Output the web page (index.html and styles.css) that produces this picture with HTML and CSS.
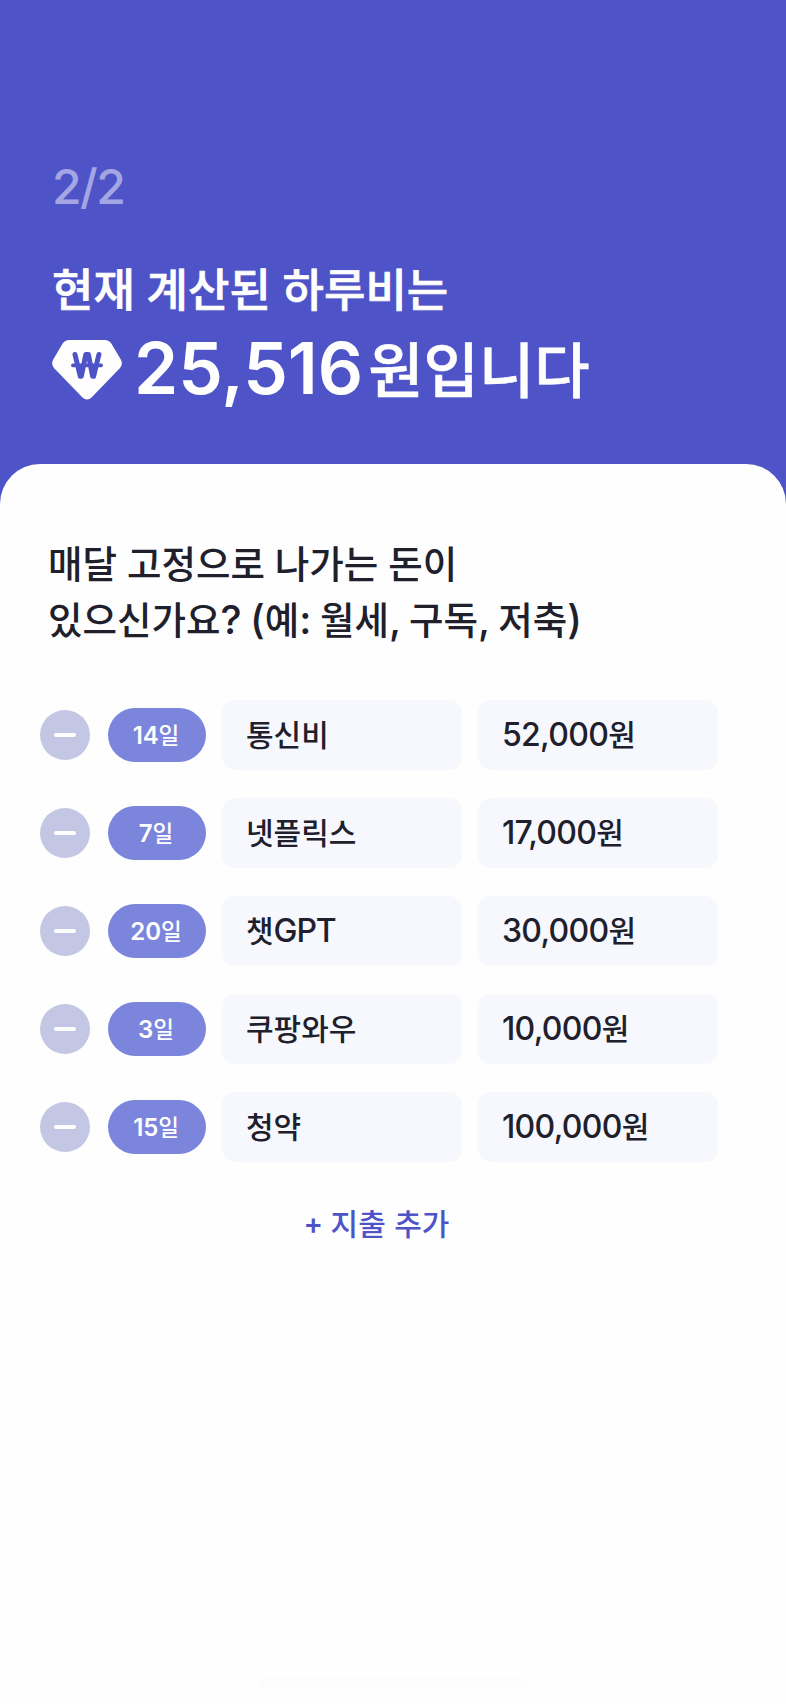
FILE: index.html
```
<!DOCTYPE html>
<html lang="ko">
<head>
<meta charset="utf-8">
<title>하루비</title>
<link rel="stylesheet" href="styles.css">
</head>
<body>
<main class="screen">
  <header class="header">
    <p class="step">2/2</p>
    <h1 class="title"><span class="ko">현재 계산된 하루비는</span></h1>
    <div class="amount">
      <svg class="gem" width="70" height="60" viewBox="0 0 70 60" aria-hidden="true">
        <path fill="#fefefe" d="M17 0H53Q57 0 59.300 3.500L68.800 19.500Q71.300 24 67.800 28.200L40 57Q35 62 30 57L2.200 28.200Q-1.300 24 1.200 19.500L10.700 3.500Q13 0 17 0Z"/>
        <path fill="none" stroke="#4e54c8" stroke-width="5" stroke-linecap="round" stroke-linejoin="round" d="M23 14.500L28.300 36.300H29.300L33.800 14.500H36.400L40.600 36.300H41.600L46.900 14.500"/>
        <path stroke="#4e54c8" stroke-width="3.600" stroke-linecap="round" d="M20.800 25.400H49.200"/>
      </svg>
      <p class="sum">25,516<span class="ko unit">원입니다</span></p>
    </div>
  </header>
  <section class="sheet">
    <h2 class="question"><span class="ko">매달 고정으로 나가는 돈이</span><br><span class="ko">있으신가요</span>? (<span class="ko">예</span>: <span class="ko">월세</span>, <span class="ko">구독</span>, <span class="ko">저축</span>)</h2>
    <ul class="list">
      <li class="row"><button class="minus" aria-label="삭제"></button><span class="day">14<span class="ko">일</span></span><span class="field"><span class="ko">통신비</span></span><span class="field">52,000<span class="ko">원</span></span></li>
      <li class="row"><button class="minus" aria-label="삭제"></button><span class="day">7<span class="ko">일</span></span><span class="field"><span class="ko">넷플릭스</span></span><span class="field">17,000<span class="ko">원</span></span></li>
      <li class="row"><button class="minus" aria-label="삭제"></button><span class="day">20<span class="ko">일</span></span><span class="field latin"><span class="ko">챗</span>GPT</span><span class="field">30,000<span class="ko">원</span></span></li>
      <li class="row"><button class="minus" aria-label="삭제"></button><span class="day">3<span class="ko">일</span></span><span class="field"><span class="ko">쿠팡와우</span></span><span class="field">10,000<span class="ko">원</span></span></li>
      <li class="row"><button class="minus" aria-label="삭제"></button><span class="day">15<span class="ko">일</span></span><span class="field"><span class="ko">청약</span></span><span class="field">100,000<span class="ko">원</span></span></li>
    </ul>
    <button class="add"><span class="plus">+</span><span class="ko">지출 추가</span></button>
    <div class="home-bar"></div>
  </section>
</main>
</body>
</html>
```

FILE: styles.css
```
* { box-sizing: border-box; margin: 0; padding: 0; }

body {
  background: #4e54c8;
  font-family: Inter, "Noto Sans CJK KR", sans-serif;
  font-weight: 500;
}

button { border: 0; background: none; font: inherit; }

.screen {
  display: flex;
  flex-direction: column;
  width: 786px;
  height: 1704px;
  background: #4e54c8;
}

/* Hangul is set slightly smaller than the Latin text beside it */
.ko {
  font-family: "Noto Sans CJK KR", sans-serif;
  font-size: 0.9375em;
  font-weight: 500;
  letter-spacing: 0;
  line-height: 0;
}

.header { padding: 157px 51px 53px 52px; color: #fefefe; }

.step {
  font-size: 48px;
  font-weight: 450;
  line-height: 59px;
  letter-spacing: -1.5px;
  color: #a3a6e3;
}

.title {
  margin-top: 44px;
  font-size: 48px;
  line-height: 59px;
  word-spacing: -0.8px;
  -webkit-text-stroke: 0.7px #fefefe;
}

.amount {
  display: flex;
  align-items: center;
  gap: 12px;
  margin-top: 6px;
}

.gem { display: block; margin-top: 4px; }

.sum {
  font-size: 71px;
  font-weight: 600;
  line-height: 86px;
  white-space: nowrap;
}

.unit {
  margin-left: 5px;
  font-size: 60.200px;
  vertical-align: 1.500px;
  -webkit-text-stroke: 0.6px #fefefe;
}

.sheet {
  display: flex;
  flex: 1;
  flex-direction: column;
  padding: 72px 66px 0 40px;
  border-radius: 40px 40px 0 0;
  background: #fefefe;
  color: #20202c;
}

.question {
  padding-left: 8px;
  font-size: 40px;
  font-weight: 500;
  line-height: 56px;
  white-space: nowrap;
  word-spacing: -2.2px;
}

.question .ko { word-spacing: -0.6px; }

.list { display: grid; gap: 28px; margin-top: 52px; list-style: none; }

.row {
  display: grid;
  grid-template-columns: 50px 100px 240px 240px;
  align-items: center;
  column-gap: 16px;
}

.minus {
  display: grid;
  place-items: center;
  width: 50px;
  height: 50px;
  border-radius: 50%;
  background: #c3c7e4;
}

.minus::before {
  content: "";
  width: 22px;
  height: 4px;
  border-radius: 2px;
  background: #fefefe;
}

.day {
  height: 54px;
  margin-left: 2px;
  padding: 13px 2px 0 0;
  border-radius: 27px;
  background: #7b85dc;
  color: #fefefe;
  font-size: 24px;
  font-weight: 600;
  line-height: 29px;
  letter-spacing: -0.1px;
  text-align: center;
}

.field {
  height: 70px;
  padding: 15px 24px 0;
  border-radius: 13px;
  background: #f7f8fd;
  font-size: 32px;
  font-weight: 450;
  line-height: 39px;
  letter-spacing: -0.7px;
}

.latin { letter-spacing: -1.1px; }

.add {
  display: flex;
  justify-content: center;
  align-items: baseline;
  gap: 7.500px;
  margin-top: 43px;
  padding-right: 7px;
  font-size: 32px;
  line-height: 39px;
  color: #4e54c8;
}

.plus {
  position: relative;
  top: -1px;
  font-size: 29px;
  font-weight: 600;
}

.home-bar {
  width: 268px;
  height: 10px;
  margin: auto 0 16px 219px;
  border-radius: 5px;
  background: #fcfcfc;
}
```
